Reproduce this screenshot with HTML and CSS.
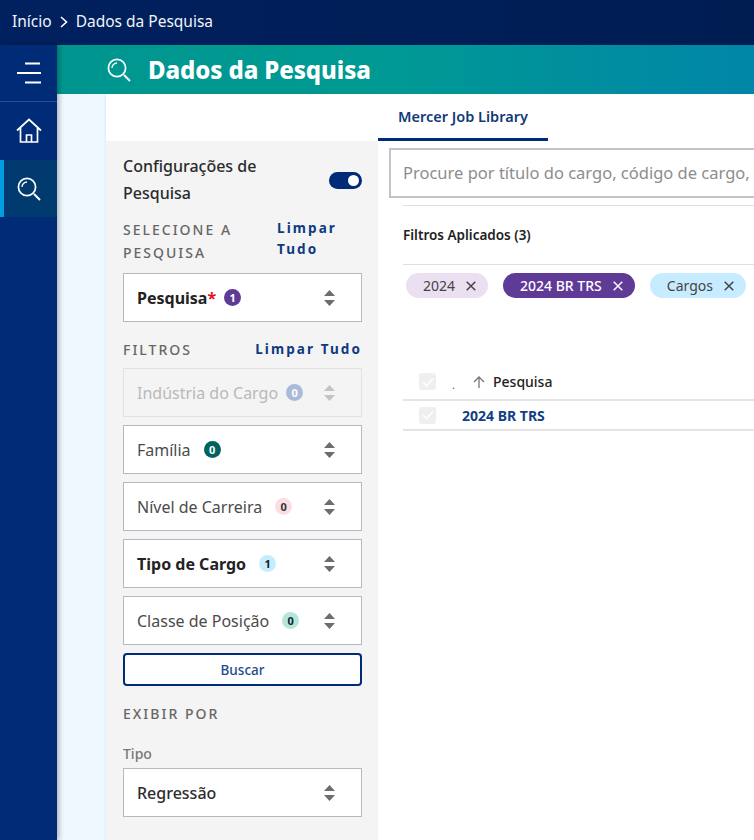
FILE: index.html
```
<!DOCTYPE html>
<html lang="pt">
<head>
<meta charset="utf-8">
<title>Dados da Pesquisa</title>
<link rel="stylesheet" href="styles.css">
</head>
<body>
<svg class="defs" width="0" height="0">
  <symbol id="sort" viewBox="0 0 11 16"><path d="M5.5 0 11 6H0zM5.500 16 0 10h11z"/></symbol>
  <symbol id="close" viewBox="0 0 10 10"><path d="M.7.7l8.600 8.600M9.300.7.700 9.300" fill="none" stroke="currentColor" stroke-width="1.500"/></symbol>
  <symbol id="lens" viewBox="0 0 24 24"><circle cx="10" cy="10" r="8.600" fill="none" stroke="currentColor" stroke-width="1.700"/><path d="M5 10a5 5 0 0 1 5-5" fill="none" stroke="currentColor" stroke-width="1.300"/><path d="M17 17l6 6" fill="none" stroke="currentColor" stroke-width="2"/></symbol>
</svg>
<header class="topbar">
  <span>Início</span>
  <svg class="crumb" width="8" height="12" viewBox="0 0 8 12"><path d="M1 1l5.500 5L1 11" fill="none" stroke="#fff" stroke-width="1.600"/></svg>
  <span>Dados da Pesquisa</span>
</header>
<div class="shell">
  <nav class="rail">
    <div class="rail-item rail-menu">
      <svg width="26" height="22" viewBox="0 0 26 22"><path d="M9 1.500h15M1 11h24M9 20.500h16" fill="none" stroke="#fff" stroke-width="1.800"/></svg>
    </div>
    <div class="rail-item rail-home">
      <svg width="26" height="26" viewBox="0 0 26 26"><path d="M1 12.500 13 1.500l12 11M4.500 10v14h17V10M10.500 24v-7h5v7" fill="none" stroke="#fff" stroke-width="1.700"/></svg>
    </div>
    <div class="rail-item rail-active">
      <svg class="lens-big" width="24" height="24"><use href="#lens"/></svg>
    </div>
  </nav>
  <div class="content">
    <div class="banner">
      <svg class="lens-white" width="24" height="24"><use href="#lens"/></svg>
      <h1>Dados da Pesquisa</h1>
    </div>
    <div class="work">
      <aside class="panel-col">
        <div class="tab-spacer"></div>
        <div class="panel">
          <div class="config">
            <div class="config-title">Configurações de Pesquisa</div>
            <span class="toggle"><span class="knob"></span></span>
          </div>
          <div class="section-head head-select">
            <span class="caps caps-wrap">SELECIONE A PESQUISA</span>
            <a class="clear clear-wrap">Limpar Tudo</a>
          </div>
          <div class="select strong"><span>Pesquisa<em>*</em></span><b class="badge b-purple">1</b><svg class="sort"><use href="#sort"/></svg></div>
          <div class="section-head head-filters">
            <span class="caps">FILTROS</span>
            <a class="clear">Limpar Tudo</a>
          </div>
          <div class="select disabled"><span>Indústria do Cargo</span><b class="badge b-slate">0</b><svg class="sort"><use href="#sort"/></svg></div>
          <div class="select"><span>Família</span><b class="badge b-teal">0</b><svg class="sort"><use href="#sort"/></svg></div>
          <div class="select"><span>Nível de Carreira</span><b class="badge b-pink">0</b><svg class="sort"><use href="#sort"/></svg></div>
          <div class="select strong"><span>Tipo de Cargo</span><b class="badge b-sky">1</b><svg class="sort"><use href="#sort"/></svg></div>
          <div class="select"><span>Classe de Posição</span><b class="badge b-mint">0</b><svg class="sort"><use href="#sort"/></svg></div>
          <button class="search-btn" type="button">Buscar</button>
          <div class="caps exibir">EXIBIR POR</div>
          <div class="field-label">Tipo</div>
          <div class="select value"><span>Regressão</span><svg class="sort"><use href="#sort"/></svg></div>
        </div>
      </aside>
      <main class="main">
        <div class="tabs"><div class="tab">Mercer Job Library</div></div>
        <div class="search-row">
          <div class="search-input">Procure por título do cargo, código de cargo, título da família ou descrição</div>
        </div>
        <div class="results">
          <div class="applied">Filtros Aplicados (3)</div>
          <div class="chips">
            <span class="chip c-lilac">2024<svg class="x"><use href="#close"/></svg></span>
            <span class="chip c-purple">2024 BR TRS<svg class="x"><use href="#close"/></svg></span>
            <span class="chip c-sky">Cargos<svg class="x"><use href="#close"/></svg></span>
          </div>
          <div class="row row-head">
            <span class="check"><svg width="12" height="10" viewBox="0 0 12 10"><path d="M1 5l3.500 3.500L11 1.500" fill="none" stroke="#fff" stroke-width="1.600"/></svg></span>
            <span class="dot">.</span>
            <svg class="arrow" width="12" height="12" viewBox="0 0 12 12"><path d="M6 12V1M1 6l5-5 5 5" fill="none" stroke="#777" stroke-width="1.300"/></svg>
            <span class="col">Pesquisa</span>
          </div>
          <div class="row row-body">
            <span class="check"><svg width="12" height="10" viewBox="0 0 12 10"><path d="M1 5l3.500 3.500L11 1.500" fill="none" stroke="#fff" stroke-width="1.600"/></svg></span>
            <a class="row-link">2024 BR TRS</a>
          </div>
        </div>
      </main>
    </div>
  </div>
</div>
</body>
</html>
```
FILE: styles.css
```
* { box-sizing: border-box; }
html, body { margin: 0; height: 100%; overflow: hidden; }
body { font-family: "Noto Sans", "Liberation Sans", sans-serif; background: #fff; color: #222; width: 754px; height: 840px; }
.defs { position: absolute; }

.topbar { height: 45px; background: linear-gradient(90deg, #00205f, #001d52); color: #f2f4f8; display: flex; align-items: center; gap: 8px; padding: 0 12px 3px; font-size: 15.500px; }
.crumb { margin-top: 1px; }

.shell { display: flex; height: 795px; }
.rail { width: 57px; flex: none; background: #002c77; box-shadow: 2px 0 5px rgba(0,0,0,.28); position: relative; z-index: 2; }
.rail-item { display: flex; align-items: center; justify-content: center; }
.rail-menu { height: 57px; border-bottom: 1px solid #2a4f8e; }
.rail-home { height: 58px; }
.rail-active { height: 57px; background: #003a6e; border-left: 4px solid #009de0; padding-right: 4px; color: #fff; }
.lens-big { color: #fff; }

.content { flex: 1; min-width: 0; display: flex; flex-direction: column; }
.banner { height: 49px; background: linear-gradient(90deg, #00968f 0%, #009a93 45%, #0086a8 100%); color: #fff; display: flex; align-items: center; padding-left: 50px; flex: none; }
.lens-white { color: #fff; flex: none; }
.banner h1 { margin: 0 0 0 17px; font-size: 24px; font-weight: 800; line-height: 49px; letter-spacing: -.1px; }

.work { flex: 1; display: flex; padding-left: 49px; background: #eff8fe; }
.panel-col { width: 272px; flex: none; display: flex; flex-direction: column; box-shadow: -1px 0 3px rgba(0,0,0,.06); }
.tab-spacer { height: 47px; background: #fff; flex: none; }
.panel { flex: 1; background: #f4f4f4; padding: 12px 16px 0 17px; }

.config { display: flex; align-items: center; justify-content: space-between; }
.config-title { width: 170px; font-size: 16px; line-height: 27px; font-weight: 500; color: #2b2b2b; }
.toggle { width: 33px; height: 17px; border-radius: 9px; background: #002c77; display: flex; align-items: center; justify-content: flex-end; padding-right: 3px; }
.knob { width: 11px; height: 11px; border-radius: 50%; background: #fff; }

.section-head { display: flex; justify-content: space-between; }
.head-select { margin-top: 11px; height: 52px; }
.head-filters { margin-top: 17px; height: 21px; align-items: center; }
.caps { font-size: 14px; letter-spacing: 2px; color: #666; line-height: 23px; font-weight: 500; }
.caps-wrap { width: 130px; }
.clear { font-size: 13.500px; font-weight: 700; letter-spacing: 2.100px; color: #0e3a82; line-height: 21px; }
.clear-wrap { width: 85px; }

.select { height: 49px; background: #fff; border: 1px solid #b3bac4; display: flex; align-items: center; padding: 0 26px 0 13px; font-size: 16px; color: #4b4b4b; margin-bottom: 8px; position: relative; }
.select span { white-space: nowrap; }
.head-select + .select { margin-top: 0; margin-bottom: 0; margin-top: 3px; }
.head-filters + .select { margin-top: 8px; }
.strong { font-weight: 700; color: #222; }
.select em { color: #e0121f; font-style: normal; }
.disabled { background: #f4f4f4; border-color: #e2e2e2; color: #b9b9b9; }
.value { color: #2d2d2d; font-weight: 500; margin-bottom: 0; margin-top: 5px; }
.sort { width: 11px; height: 16px; fill: #6d6d6d; margin-left: auto; flex: none; }
.disabled .sort { fill: #c4c4c4; }

.badge { width: 17px; height: 17px; border-radius: 50%; margin-left: 8px; display: flex; align-items: center; justify-content: center; font-size: 11px; font-weight: 700; flex: none; }
.b-purple { background: #5f3a96; color: #fff; }
.b-slate { background: #a9bbd8; color: #fff; }
.b-teal { background: #00635c; color: #fff; margin-left: 13px; }
.b-pink { background: #fbdde3; color: #333; margin-left: 13px; }
.b-sky { background: #c8ecff; color: #123; margin-left: 13px; }
.b-mint { background: #b5e6da; color: #123; margin-left: 13px; }

.search-btn { display: block; width: 239px; height: 33px; border: 2px solid #002c77; border-radius: 4px; background: #fff; color: #1c4a91; font: 500 13.500px "Noto Sans", sans-serif; padding: 0; }
.exibir { margin-top: 16px; }
.field-label { margin-top: 19px; font-size: 14px; line-height: 19px; color: #777; font-weight: 500; }

.main { flex: 1; min-width: 0; display: flex; flex-direction: column; background: #fff; overflow: hidden; }
.tabs { height: 47px; flex: none; }
.tab { width: 170px; height: 47px; border-bottom: 3px solid #002c77; text-align: center; font-size: 14.500px; font-weight: 600; color: #103a78; line-height: 45px; }
.search-row { padding: 7px 0 0 11px; flex: none; }
.search-input { width: 460px; height: 50px; border: 2px solid #c0c5cb; background: #fff; color: #8d8d8d; font-size: 16.500px; line-height: 46px; padding-left: 12px; white-space: nowrap; overflow: hidden; }
.results { padding-left: 25px; margin-top: 7px; }
.applied { height: 60px; border-top: 1px solid #dfdfdf; border-bottom: 1px solid #dfdfdf; font-size: 13.500px; font-weight: 600; color: #222; line-height: 58px; }
.chips { display: flex; gap: 15px; margin-top: 8px; padding-left: 3px; white-space: nowrap; }
.chip { height: 25px; border-radius: 13px; display: inline-flex; align-items: center; padding: 0 12px 0 17px; font-size: 14px; flex: none; }
.x { width: 10px; height: 10px; margin-left: 11px; flex: none; }
.c-lilac { background: #eae0f2; color: #444; }
.c-purple { background: #5f3a96; color: #fff; font-weight: 500; }
.c-sky { background: #c8ecff; color: #444; }

.row { display: flex; align-items: center; border-bottom: 1px solid #e4e4e4; }
.row-head { height: 37px; margin-top: 66px; border-bottom-width: 2px; }
.row-body { height: 30px; border-bottom-width: 2px; }
.check { width: 17px; height: 17px; margin-left: 16px; border-radius: 3px; background: #efefef; display: flex; align-items: center; justify-content: center; flex: none; }
.dot { margin-left: 16px; width: 4px; font-size: 11px; color: #555; line-height: 1; margin-top: 6px; }
.arrow { margin-left: 17px; }
.col { margin-left: 8px; font-size: 14px; font-weight: 500; color: #222; }
.row-link { margin-left: 26px; font-size: 14px; font-weight: 700; color: #123f86; }
```
